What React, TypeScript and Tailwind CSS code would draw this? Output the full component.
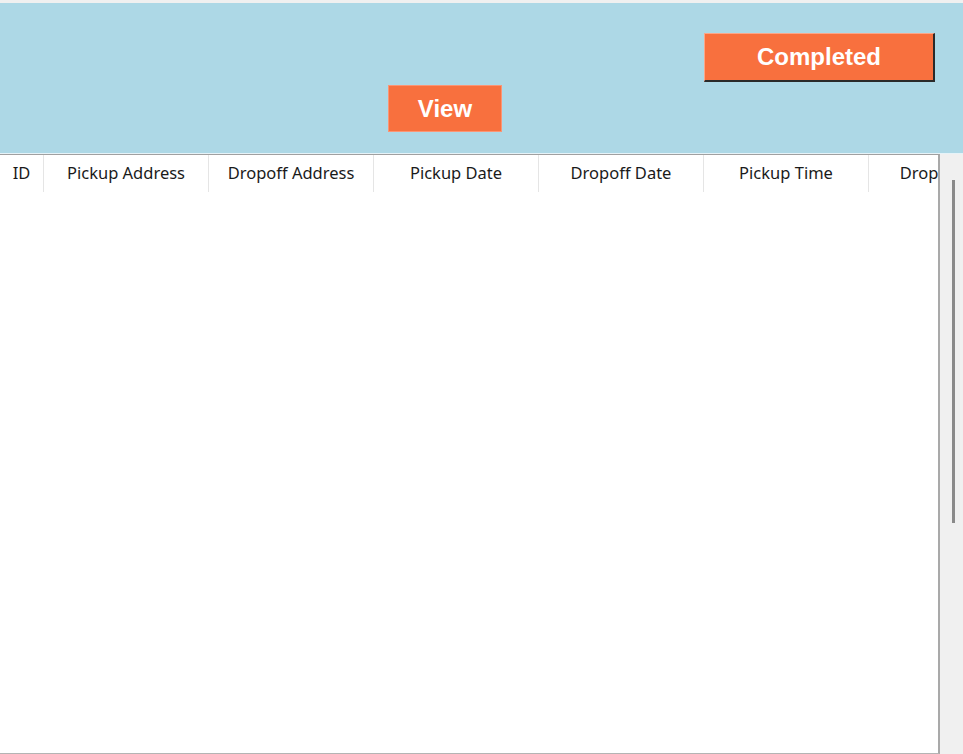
import React from 'react'

const columns = ['Pickup Address', 'Dropoff Address', 'Pickup Date', 'Dropoff Date', 'Pickup Time', 'Dropoff Time']

const App = () => {
  return (
    <div className="w-[963px] h-[754px] bg-[#f0f0f0] flex flex-col overflow-hidden">
      <div className="h-[3px] bg-[#f0f0f0]" />

      {/* top panel */}
      <div className="h-[150px] bg-[#add8e6] flex flex-col items-start">
        <div className="pl-[704px] pt-[30px]">
          <button className="w-[231px] h-[49px] bg-[#f8703e] text-white font-bold text-[24px] border-t border-l border-[#fca789] border-r-2 border-b-2 border-r-[#2a2a2a] border-b-[#2a2a2a] [font-family:'Liberation_Sans',Arial,sans-serif]">
            Completed
          </button>
        </div>
        <div className="pl-[388px] pt-[3px]">
          <button className="w-[114px] h-[47px] bg-[#f8703e] text-white font-bold text-[24px] border border-[#fb9575] [font-family:'Liberation_Sans',Arial,sans-serif]">
            View
          </button>
        </div>
      </div>
      <div className="h-px bg-[#e6f3f8]" />

      {/* table */}
      <div className="flex flex-1 min-h-0">
        <div className="w-[940px] flex flex-col bg-white border-t border-b border-r-2 border-t-[#a0a0a0] border-b-[#b4b4b4] border-r-[#a9a9a9] overflow-hidden">
          <div className="flex h-[37px] shrink-0 text-[16.5px] text-[#1a1a1a] [font-family:'Noto_Sans','Open_Sans',sans-serif]">
            <div className="w-[44px] shrink-0 flex items-center justify-center border-r border-[#e5e5e5]">ID</div>
            {columns.map(c => (
              <div key={c} className="w-[165px] shrink-0 flex items-center justify-center border-r border-[#e5e5e5] whitespace-nowrap">
                {c}
              </div>
            ))}
          </div>
          <div className="flex-1" />
        </div>
        <div className="flex-1 bg-[#f0f0f0] pt-[26px] pl-[12px]">
          <div className="w-[3px] h-[343px] bg-[#8a8a8a]" />
        </div>
      </div>
    </div>
  )
}

export default App
